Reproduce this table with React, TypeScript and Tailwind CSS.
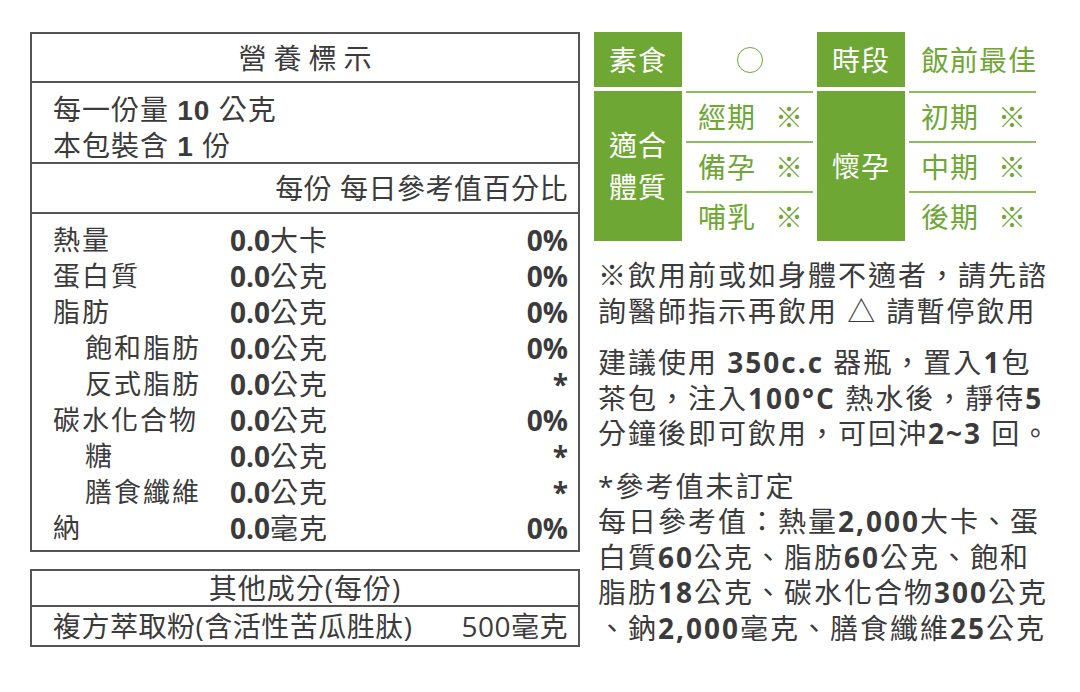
import React from "react";

const rows: { label: string; indent?: boolean; value: string; unit: string; pct: string }[] = [
  { label: "熱量", value: "0.0", unit: "大卡", pct: "0%" },
  { label: "蛋白質", value: "0.0", unit: "公克", pct: "0%" },
  { label: "脂肪", value: "0.0", unit: "公克", pct: "0%" },
  { label: "飽和脂肪", indent: true, value: "0.0", unit: "公克", pct: "0%" },
  { label: "反式脂肪", indent: true, value: "0.0", unit: "公克", pct: "*" },
  { label: "碳水化合物", value: "0.0", unit: "公克", pct: "0%" },
  { label: "糖", indent: true, value: "0.0", unit: "公克", pct: "*" },
  { label: "膳食纖維", indent: true, value: "0.0", unit: "公克", pct: "*" },
  { label: "納", value: "0.0", unit: "毫克", pct: "0%" },
];

function SubRow({ label }: { label: string }) {
  return (
    <div className="h-[50px] border-t-2 border-[#8cbf5c] flex items-center pl-[12px] text-[#6ea734] text-[28px] tracking-[1px] whitespace-nowrap">
      <span className="w-[77px]">{label}</span>
      <span>※</span>
    </div>
  );
}

export default function App() {
  return (
    <div className="w-[1080px] h-[692px] bg-white flex pt-[32px] pl-[30px] text-[#3b3b3b] font-['Open_Sans','Noto_Sans_CJK_TC',sans-serif]">
      {/* Left column */}
      <div className="w-[550px] flex flex-col">
        <div className="border-2 border-[#555] flex flex-col">
          <div className="h-[49px] border-b-2 border-[#555] flex items-center justify-center text-[28px] tracking-[7px] pl-[7px]">
            營養標示
          </div>
          <div className="h-[81px] border-b-2 border-[#555] pl-[21px] pt-[9px] text-[28px] tracking-[1px] leading-[34px] whitespace-nowrap">
            <div>
              每一份量 <span className="font-bold font-['Liberation_Sans']">10</span> 公克
            </div>
            <div>
              本包裝含 <span className="font-bold font-['Liberation_Sans']">1</span> 份
            </div>
          </div>
          <div className="h-[50px] border-b-2 border-[#555] flex items-center justify-end pr-[10px] text-[28px] tracking-[0.5px] whitespace-nowrap">
            每份 每日參考值百分比
          </div>
          <div className="h-[336px] pt-[8px] pl-[21px] pr-[10px]">
            {rows.map((r) => (
              <div key={r.label} className="h-[36px] flex items-center text-[27px] tracking-[2px] whitespace-nowrap">
                <div className={`w-[177px] ${r.indent ? "pl-[32px]" : ""}`}>{r.label}</div>
                <div className="flex-1 text-[28px] tracking-[1px]">
                  <span className="font-bold tracking-[0px]">{r.value}</span>
                  {r.unit}
                </div>
                <div className="font-bold tracking-[0px] text-[28px]">{r.pct}</div>
              </div>
            ))}
          </div>
        </div>
        <div className="mt-[17px] border-2 border-[#555] flex flex-col">
          <div className="h-[36px] border-b-2 border-[#555] flex items-center justify-center text-[28px] tracking-[1px] whitespace-nowrap">
            其他成分(每份)
          </div>
          <div className="h-[38px] flex items-center justify-between pl-[21px] pr-[10px] text-[28px] tracking-[0.5px] whitespace-nowrap">
            <span>複方萃取粉(含活性苦瓜胜肽)</span>
            <span>500毫克</span>
          </div>
        </div>
      </div>

      {/* Right column */}
      <div className="ml-[14px] w-[460px] flex flex-col">
        <div className="grid grid-cols-[88px_127px_88px_127px] gap-[4px]">
          <div className="h-[55px] bg-[#6ea734] text-white flex items-center justify-center text-[28px] tracking-[1px] whitespace-nowrap">
            素食
          </div>
          <div className="h-[55px] flex items-center justify-center">
            <div className="w-[26px] h-[26px] rounded-full border-[1.5px] border-[#6ea734]" />
          </div>
          <div className="h-[55px] bg-[#6ea734] text-white flex items-center justify-center text-[28px] tracking-[1px] whitespace-nowrap">
            時段
          </div>
          <div className="h-[55px] flex items-center pl-[12px] text-[#6ea734] text-[28px] tracking-[1px] whitespace-nowrap">
            飯前最佳
          </div>

          <div className="h-[150px] bg-[#6ea734] text-white flex flex-col items-center justify-center text-[28px] tracking-[1px] leading-[42px] whitespace-nowrap">
            <div>適合</div>
            <div>體質</div>
          </div>
          <div className="flex flex-col">
            <SubRow label="經期" />
            <SubRow label="備孕" />
            <SubRow label="哺乳" />
          </div>
          <div className="h-[150px] bg-[#6ea734] text-white flex items-center justify-center text-[28px] tracking-[1px] whitespace-nowrap">
            懷孕
          </div>
          <div className="flex flex-col">
            <SubRow label="初期" />
            <SubRow label="中期" />
            <SubRow label="後期" />
          </div>
        </div>

        <div className="mt-[17px] text-[28px] tracking-[2px] leading-[35.5px] whitespace-nowrap pl-[4px]">
          <div>※飲用前或如身體不適者，請先諮</div>
          <div>詢醫師指示再飲用 △ 請暫停飲用</div>
        </div>

        <div className="mt-[16px] text-[28px] tracking-[2px] leading-[35.5px] whitespace-nowrap pl-[4px]">
          <div>
            建議使用 <span className="font-bold">350c.c</span> 器瓶，置入<span className="font-bold">1</span>包
          </div>
          <div>
            茶包，注入<span className="font-bold">100°C</span> 熱水後，靜待<span className="font-bold">5</span>
          </div>
          <div>
            分鐘後即可飲用，可回沖<span className="font-bold">2~3</span> 回。
          </div>
        </div>

        <div className="mt-[17px] text-[28px] tracking-[2px] leading-[35.5px] whitespace-nowrap pl-[4px]">
          <div>*參考值未訂定</div>
          <div>
            每日參考值：熱量<span className="font-bold">2,000</span>大卡、蛋
          </div>
          <div>
            白質<span className="font-bold">60</span>公克、脂肪<span className="font-bold">60</span>公克、飽和
          </div>
          <div>
            脂肪<span className="font-bold">18</span>公克、碳水化合物<span className="font-bold">300</span>公克
          </div>
          <div>
            、鈉<span className="font-bold">2,000</span>毫克、膳食纖維<span className="font-bold">25</span>公克
          </div>
        </div>
      </div>
    </div>
  );
}
